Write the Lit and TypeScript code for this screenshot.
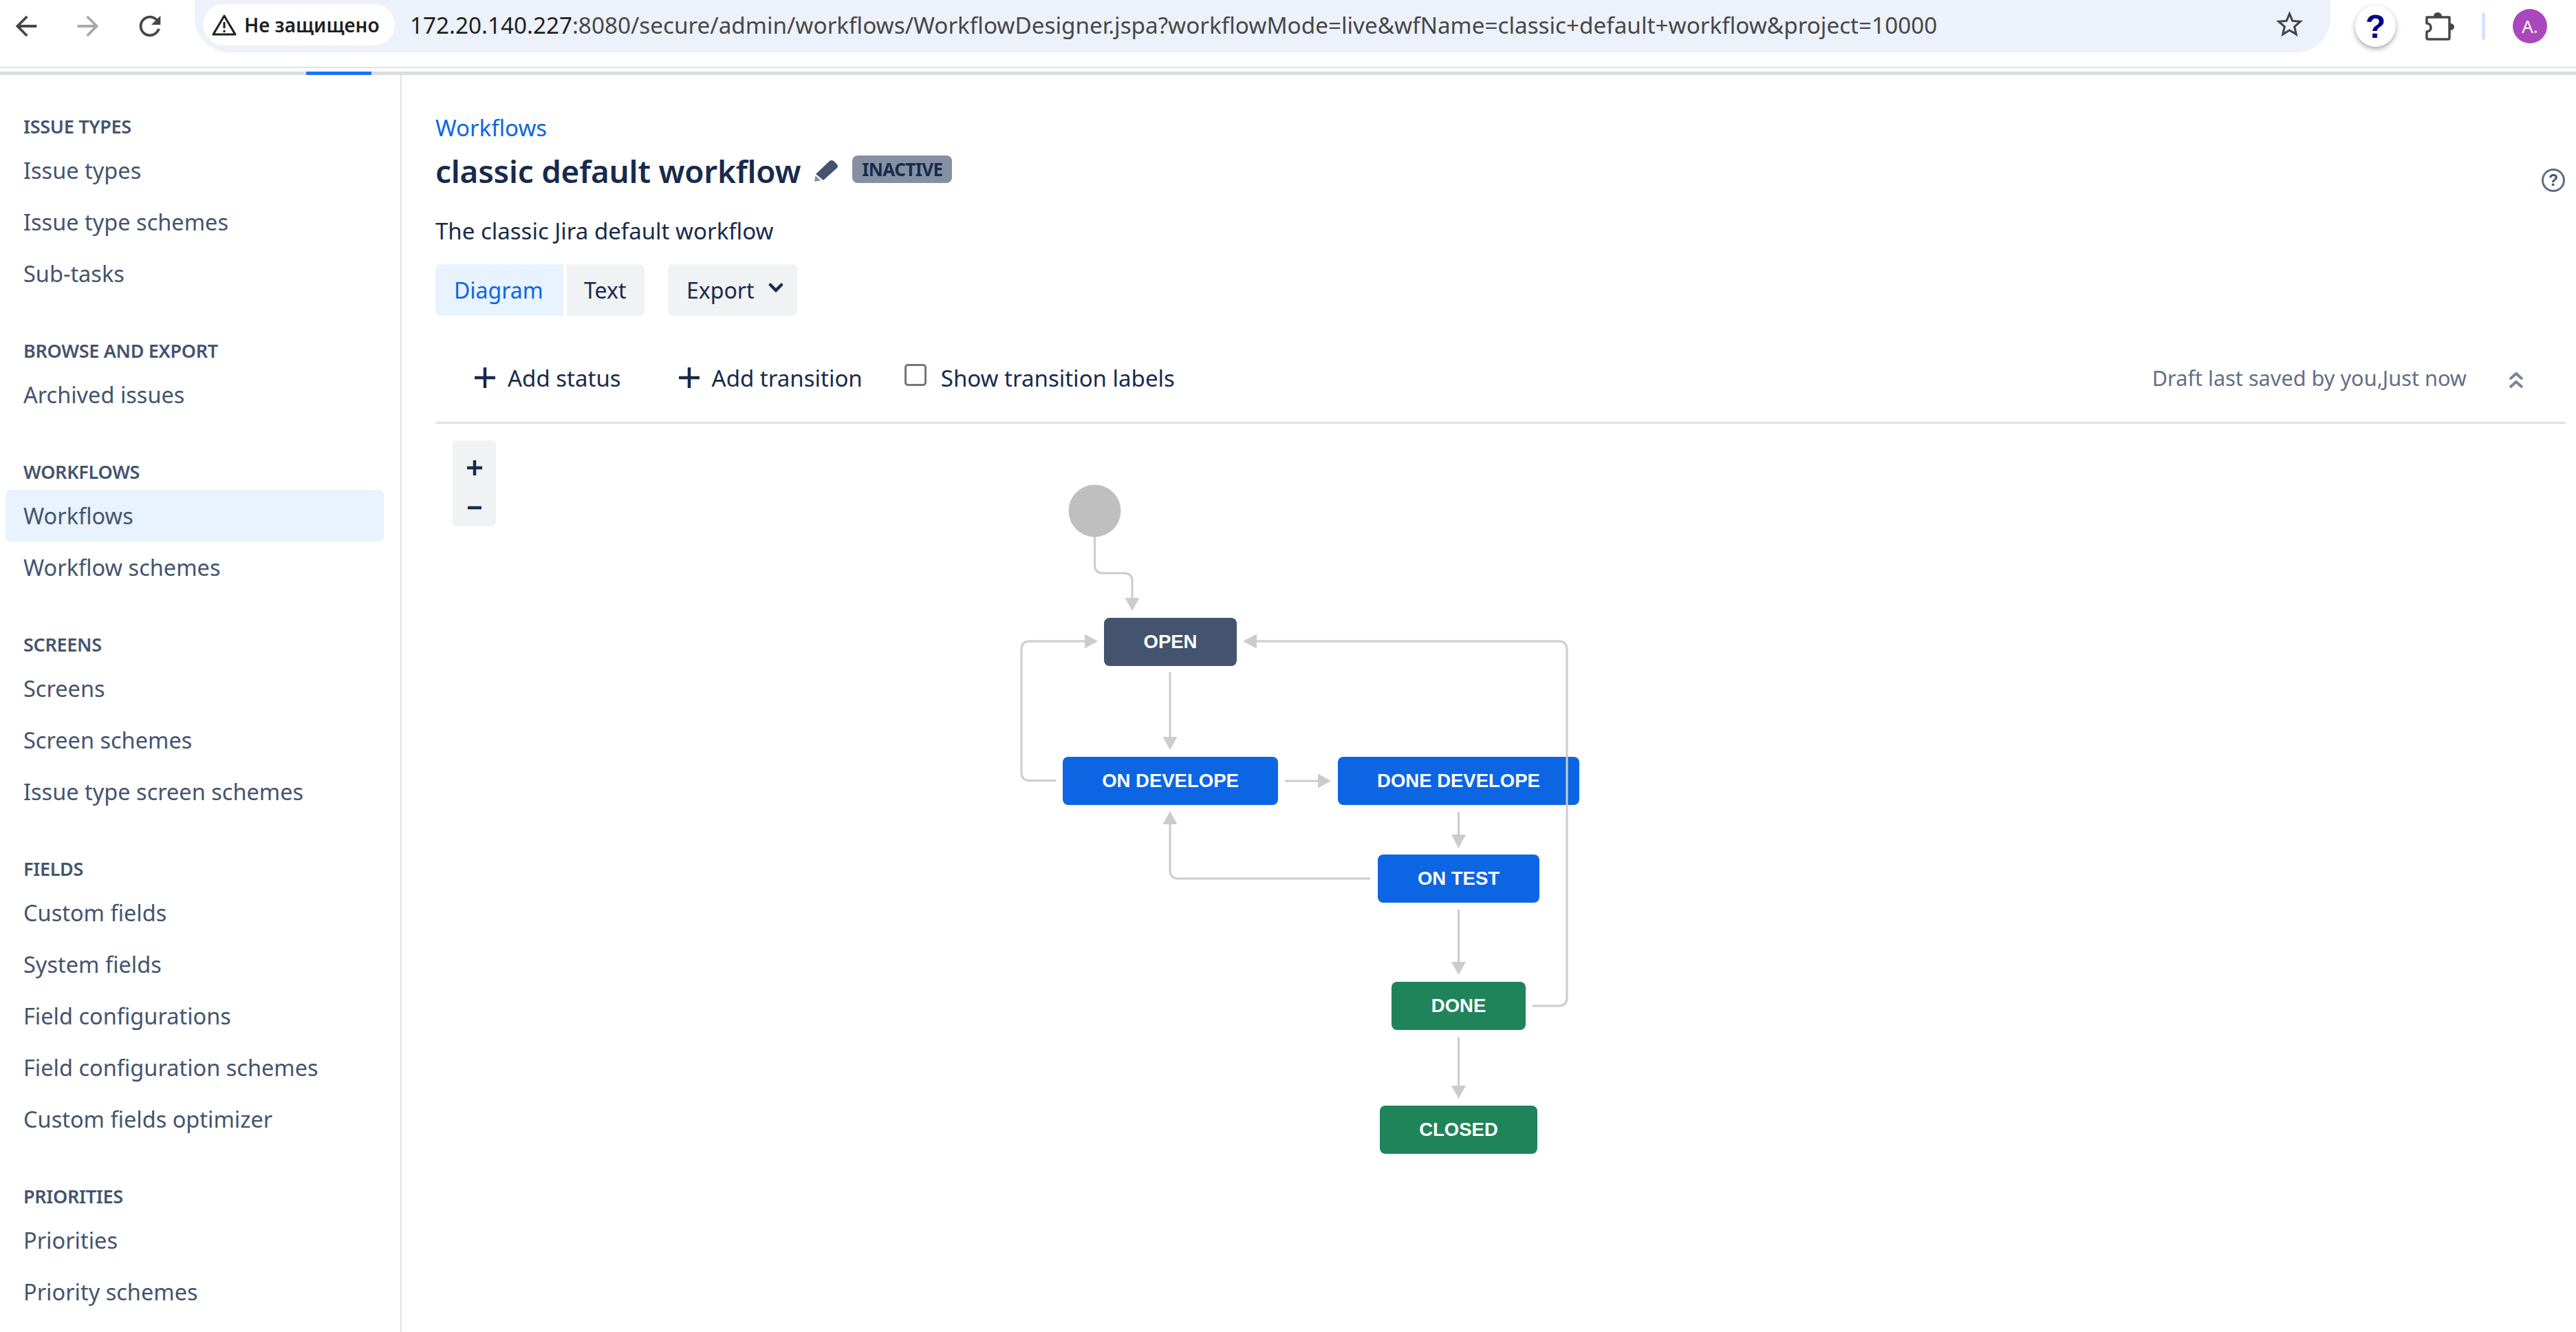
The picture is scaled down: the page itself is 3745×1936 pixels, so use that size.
import { LitElement, html, css, svg } from 'lit';
import { customElement } from 'lit/decorators.js';

// diagram coordinates are page pixels, shifted by the canvas origin
const OX = 633;
const OY = 616;

const nodes = [
  { label: 'OPEN', x: 1605, y: 898, w: 193, tone: 'todo' },
  { label: 'ON DEVELOPE', x: 1545, y: 1100, w: 313, tone: 'progress' },
  { label: 'DONE DEVELOPE', x: 1945, y: 1100, w: 351, tone: 'progress' },
  { label: 'ON TEST', x: 2003, y: 1242, w: 235, tone: 'progress' },
  { label: 'DONE', x: 2023, y: 1427, w: 195, tone: 'done' },
  { label: 'CLOSED', x: 2006, y: 1607, w: 229, tone: 'done' },
];

const lines = [
  'M1591.5 780 V821 Q1591.5 833 1603.5 833 H1634 Q1646 833 1646 845 V872',
  'M1701 977 V1074',
  'M1535 1134.5 H1497 Q1485 1134.5 1485 1122.5 V944 Q1485 932 1497 932 H1580',
  'M1868 1135 H1919',
  'M2120.5 1180 V1216',
  'M1992 1277 H1713 Q1701 1277 1701 1265 V1195',
  'M2120.5 1322 V1401',
  'M2120.5 1507 V1581',
  'M2228 1462 H2266 Q2278 1462 2278 1450 V944 Q2278 932 2266 932 H1824',
];

const arrows = [
  '1635.5,869 1656.5,869 1646,888',
  '1690.5,1071 1711.5,1071 1701,1090',
  '1577,921.5 1577,942.5 1596,932',
  '1916,1124.5 1916,1145.5 1935,1135',
  '2110,1213 2131,1213 2120.5,1233',
  '1690.5,1198 1711.5,1198 1701,1179',
  '2110,1398 2131,1398 2120.5,1417',
  '2110,1578 2131,1578 2120.5,1597',
  '1827,921.5 1827,942.5 1807,932',
];

const groups = [
  { title: 'ISSUE TYPES', items: ['Issue types', 'Issue type schemes', 'Sub-tasks'] },
  { title: 'BROWSE AND EXPORT', items: ['Archived issues'] },
  { title: 'WORKFLOWS', items: ['Workflows', 'Workflow schemes'] },
  { title: 'SCREENS', items: ['Screens', 'Screen schemes', 'Issue type screen schemes'] },
  { title: 'FIELDS', items: ['Custom fields', 'System fields', 'Field configurations', 'Field configuration schemes', 'Custom fields optimizer'] },
  { title: 'PRIORITIES', items: ['Priorities', 'Priority schemes'] },
];

const plus = html`<svg class="plus" viewBox="0 0 30 30"><path d="M15 1V29M1 15H29" stroke="#172b4d" stroke-width="4.5" stroke-linecap="round"/></svg>`;

@customElement('app-root')
export class AppRoot extends LitElement {
  static styles = css`
    :host {
      display: block;
      height: 1936px;
      overflow: hidden;
      background: #fff;
      color: #172b4d;
      font-family: 'Noto Sans', sans-serif;
      font-size: 33px;
    }
    .chrome {
      display: flex;
      align-items: center;
      height: 76px;
      padding-bottom: 21px;
      position: relative;
      border-bottom: 2px solid #e2e2e2;
      box-sizing: content-box;
    }
    .nav {
      display: flex;
      width: 283px;
      padding-left: 15px;
      gap: 44px;
      box-sizing: border-box;
    }
    .nav svg { width: 46px; height: 46px; }
    .omnibox {
      display: flex;
      align-items: center;
      width: 3105px;
      height: 86px;
      margin-top: -10px;
      padding: 5px 12px 0;
      box-sizing: border-box;
      background: #ecf1fa;
      border-radius: 0 0 50px 50px;
    }
    .chip {
      display: flex;
      align-items: center;
      width: 279px;
      height: 60px;
      padding-left: 12px;
      gap: 10px;
      box-sizing: border-box;
      background: #fff;
      border-radius: 30px;
      font-size: 28px;
      font-weight: 600;
      color: #1f1f1f;
      white-space: nowrap;
    }
    .url {
      margin-left: 22px;
      font-size: 33.250px;
      color: #474747;
      white-space: nowrap;
      flex: 1;
    }
    .url b { font-weight: 400; color: #1f1f1f; }
    .star { width: 47px; height: 47px; margin-right: 24px; }
    .tools {
      display: flex;
      align-items: center;
      margin-left: 36px;
    }
    .ext-help {
      width: 59px;
      height: 60px;
      border-radius: 50%;
      background: #fff;
      box-shadow: 0 3px 7px rgba(0, 0, 0, 0.35);
      display: flex;
      align-items: center;
      justify-content: center;
      font-family: 'Liberation Sans', sans-serif;
      font-size: 48px;
      font-weight: 700;
      color: #00008b;
    }
    .puzzle { width: 42px; height: 42px; margin-left: 43px; }
    .sep {
      width: 5px;
      height: 40px;
      margin-left: 40px;
      background: #d3e3fd;
      border-radius: 3px;
    }
    .avatar {
      width: 50px;
      height: 50px;
      margin-left: 40px;
      border-radius: 50%;
      background: #ab47bc;
      color: #fff;
      font-size: 26px;
      display: flex;
      align-items: center;
      justify-content: center;
    }
    .progress {
      height: 5px;
      margin-top: 5px;
      padding-left: 445px;
      background: #dadee2;
    }
    .progress i {
      display: block;
      width: 95px;
      height: 5px;
      background: #1a73f5;
    }
    .page {
      display: flex;
      height: 1827px;
    }
    .side {
      width: 584px;
      flex: none;
      box-sizing: border-box;
      border-right: 2px solid #dfe1e6;
      padding: 48px 24px 0 8px;
      color: #44546f;
      font-size: 32.5px;
    }
    .group { margin-bottom: 48px; }
    .group h4 {
      margin: 0;
      height: 53px;
      line-height: 53px;
      padding-left: 26px;
      font-size: 27px;
      font-weight: 600;
      letter-spacing: -0.3px;
    }
    .item {
      height: 75px;
      line-height: 75px;
      padding-left: 26px;
      border-radius: 8px;
    }
    .item.on { background: #e9f2ff; }
    .main {
      flex: 1;
      padding: 53px 15px 0 49px;
      min-width: 0;
    }
    .crumb {
      height: 48px;
      line-height: 48px;
      color: #0c66e4;
    }
    .head {
      display: flex;
      align-items: center;
      height: 60px;
      margin-top: 8px;
    }
    .head h1 {
      margin: 0;
      font-size: 45.800px;
      font-weight: 600;
      letter-spacing: -0.2px;
    }
    .pencil { width: 35px; height: 32px; margin: 0 20px 0 20px; }
    .badge {
      height: 40px;
      line-height: 40px;
      padding: 0 14px;
      background: #8590a2;
      border-radius: 8px;
      font-size: 26px;
      font-weight: 700;
      letter-spacing: -0.6px;
      margin-top: -4px;
    }
    .help { width: 36px; height: 36px; margin-left: auto; margin-top: 28px; margin-right: 0; }
    .desc {
      height: 48px;
      line-height: 48px;
      margin-top: 34px;
    }
    .tabs {
      display: flex;
      height: 75px;
      margin-top: 24px;
      font-size: 32px;
    }
    .tab {
      display: flex;
      align-items: center;
      background: #f1f2f4;
      padding: 0 27px;
      box-sizing: border-box;
      white-space: nowrap;
    }
    .tab.first {
      width: 186px;
      background: #e9f2ff;
      color: #0c66e4;
      border-radius: 8px 0 0 8px;
    }
    .tab.second {
      width: 113px;
      margin-left: 5px;
      padding-left: 25px;
      border-radius: 0 8px 8px 0;
    }
    .tab.export {
      width: 188px;
      margin-left: 34px;
      border-radius: 8px;
    }
    .chev { width: 22px; height: 14px; margin: -8px 0 0 auto; margin-right: -7px; }
    .bar {
      display: flex;
      align-items: center;
      height: 60px;
      padding: 60px 0 34px 57px;
      border-bottom: 3px solid #dfe1e6;
      white-space: nowrap;
    }
    .action {
      display: flex;
      align-items: center;
      gap: 18px;
    }
    .plus { width: 30px; height: 30px; }
    .gap1 { margin-left: 84px; }
    .check {
      width: 32px;
      height: 32px;
      margin: -8px 21px 0 61px;
      box-sizing: border-box;
      border: 3px solid #757575;
      border-radius: 5px;
      background: #fff;
    }
    .draft {
      margin-left: auto;
      color: #626f86;
      margin-top: -1px;
      font-size: 30.700px;
    }
    .up { width: 24px; height: 28px; margin: 8px 60px 0 60px; }
    .canvas {
      position: relative;
      height: 1200px;
    }
    .zoom {
      position: absolute;
      left: 25px;
      top: 24px;
      width: 63px;
      height: 125px;
      background: #f1f2f4;
      border-radius: 6px;
    }
    .zoom svg { display: block; width: 63px; height: 125px; }
    .node {
      position: absolute;
      height: 70px;
      display: flex;
      align-items: center;
      justify-content: center;
      border-radius: 8px;
      color: #fff;
      font-family: 'Liberation Sans', sans-serif;
      font-size: 27.500px;
      font-weight: 700;
    }
    .todo { background: #44546f; }
    .progress-node { background: #0c66e4; }
    .done { background: #1f845a; }
    .wires {
      position: absolute;
      left: 0;
      top: 0;
      width: 3112px;
      height: 1320px;
      pointer-events: none;
    }
  `;

  renderChrome() {
    return html`
      <div class="chrome">
        <div class="nav">
          <svg viewBox="0 0 24 24"><path fill="#474747" d="M20 11H7.83l5.59-5.59L12 4l-8 8 8 8 1.41-1.41L7.83 13H20v-2z"/></svg>
          <svg viewBox="0 0 24 24"><path fill="#a8a8a8" d="M12 4l-1.41 1.41L16.17 11H4v2h12.17l-5.58 5.59L12 20l8-8z"/></svg>
          <svg viewBox="0 0 24 24"><path fill="#474747" d="M17.65 6.35C16.2 4.9 14.21 4 12 4c-4.42 0-7.99 3.58-7.99 8s3.57 8 7.99 8c3.73 0 6.84-2.55 7.73-6h-2.08c-.82 2.33-3.04 4-5.65 4-3.31 0-6-2.69-6-6s2.69-6 6-6c1.66 0 3.14.69 4.22 1.78L13 11h7V4l-2.35 2.35z"/></svg>
        </div>
        <div class="omnibox">
          <div class="chip">
            <svg width="38" height="32" viewBox="0 0 38 32"><path d="M19 3L35 30H3Z" fill="none" stroke="#1f1f1f" stroke-width="3" stroke-linejoin="round"/><path d="M19 12V21M19 24V27" stroke="#1f1f1f" stroke-width="3"/></svg>
            Не защищено
          </div>
          <div class="url"><b>172.20.140.227</b>:8080/secure/admin/workflows/WorkflowDesigner.jspa?workflowMode=live&amp;wfName=classic+default+workflow&amp;project=10000</div>
          <svg class="star" viewBox="0 0 24 24"><path fill="#474747" d="M22 9.24l-7.19-.62L12 2 9.19 8.63 2 9.24l5.46 4.73L5.82 21 12 17.27 18.18 21l-1.63-7.03L22 9.24zM12 15.4l-3.76 2.27 1-4.28-3.32-2.88 4.38-.38L12 6.1l1.71 4.04 4.38.38-3.32 2.88 1 4.28L12 15.4z"/></svg>
        </div>
        <div class="tools">
          <div class="ext-help">?</div>
          <svg class="puzzle" viewBox="0 0 42 42">
            <path d="M2 8H35V38Q35 40 33 40H4Q2 40 2 38V29C10 29 10 17 2 17Z" fill="none" stroke="#474747" stroke-width="3.500" stroke-linejoin="round"/>
            <path d="M12 7C12 -1 24 -1 24 7ZM36 17C44 17 44 27 36 27Z" fill="#474747"/>
          </svg>
          <div class="sep"></div>
          <div class="avatar">A.</div>
        </div>
      </div>
      <div class="progress"><i></i></div>
    `;
  }

  renderSide() {
    return html`
      <nav class="side">
        ${groups.map(g => html`
          <div class="group">
            <h4>${g.title}</h4>
            ${g.items.map(i => html`<div class="item ${i === 'Workflows' ? 'on' : ''}">${i}</div>`)}
          </div>
        `)}
      </nav>
    `;
  }

  renderDiagram() {
    return html`
      <div class="canvas">
        <div class="zoom">
          <svg viewBox="0 0 63 125">
            <path d="M32 29V51M21 40H43" stroke="#172b4d" stroke-width="4.5"/>
            <path d="M22 98H42" stroke="#172b4d" stroke-width="4.5"/>
          </svg>
        </div>
        ${nodes.map(n => html`
          <div class="node ${n.tone === 'progress' ? 'progress-node' : n.tone}" style="left:${n.x - OX}px;top:${n.y - OY}px;width:${n.w}px">${n.label}</div>
        `)}
        <svg class="wires" viewBox="${OX} ${OY} 3112 1320">
          <circle cx="1591.5" cy="742.5" r="38" fill="#bfbfbf"/>
          ${lines.map(d => svg`<path d=${d} fill="none" stroke="#cccccc" stroke-width="3"/>`)}
          ${arrows.map(p => svg`<polygon points=${p} fill="#cccccc"/>`)}
        </svg>
      </div>
    `;
  }

  render() {
    return html`
      ${this.renderChrome()}
      <div class="page">
        ${this.renderSide()}
        <main class="main">
          <div class="crumb">Workflows</div>
          <div class="head">
            <h1>classic default workflow</h1>
            <svg class="pencil" viewBox="0 0 35 32">
              <path d="M2 21L22 2Q25 0 28 2L33 7Q35 10 33 12L13 30Z" fill="#44546f"/>
              <path d="M0 32L1.500 23L9 30.500Z" fill="#8590a2"/>
            </svg>
            <span class="badge">INACTIVE</span>
            <svg class="help" viewBox="0 0 36 36">
              <circle cx="18" cy="18" r="15.500" fill="none" stroke="#5e6c84" stroke-width="3"/>
              <text x="18" y="26" text-anchor="middle" font-family="Liberation Sans, sans-serif" font-size="23" font-weight="700" fill="#44546f">?</text>
            </svg>
          </div>
          <div class="desc">The classic Jira default workflow</div>
          <div class="tabs">
            <div class="tab first">Diagram</div>
            <div class="tab second">Text</div>
            <div class="tab export">Export
              <svg class="chev" viewBox="0 0 22 14"><path d="M3 3L11 11L19 3" fill="none" stroke="#172b4d" stroke-width="4.500" stroke-linecap="round"/></svg>
            </div>
          </div>
          <div class="bar">
            <div class="action">${plus}<span>Add status</span></div>
            <div class="action gap1">${plus}<span>Add transition</span></div>
            <div class="check"></div>
            <span>Show transition labels</span>
            <span class="draft">Draft last saved by you,Just now</span>
            <svg class="up" viewBox="0 0 24 28"><path d="M3 12L12 4L21 12M3 24L12 16L21 24" fill="none" stroke="#7a869a" stroke-width="4"/></svg>
          </div>
          ${this.renderDiagram()}
        </main>
      </div>
    `;
  }
}
